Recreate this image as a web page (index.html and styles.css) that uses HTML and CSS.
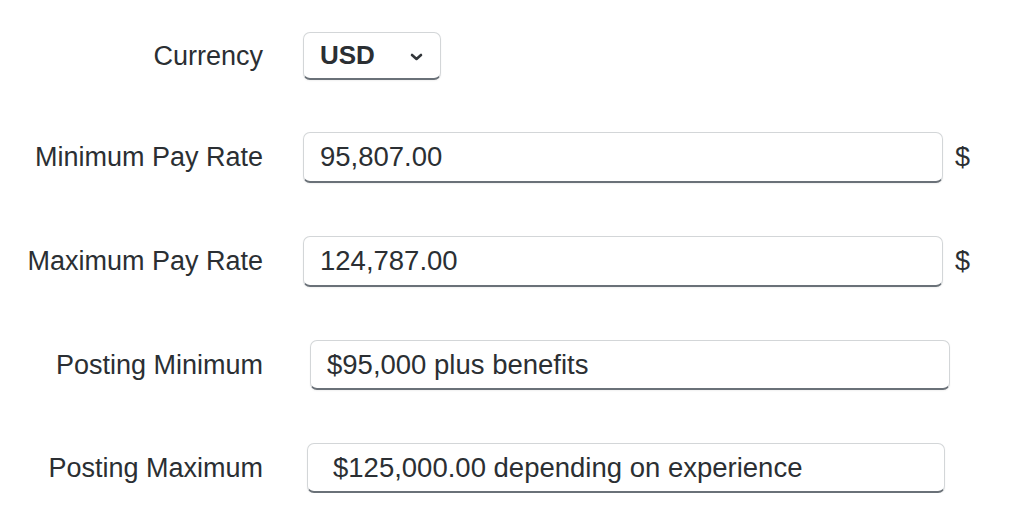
FILE: index.html
```html
<!DOCTYPE html>
<html lang="en">
<head>
    <meta charset="UTF-8">
    <meta name="viewport" content="width=device-width, initial-scale=1.0">
    <title>Pay Rate</title>
    <link rel="stylesheet" href="styles.css">
</head>
<body>
    <form class="pay-form">
        <div class="row row-select">
            <label class="label" for="currency">Currency</label>
            <div class="select">
                <span class="select-value">USD</span>
                <svg class="chevron" width="13" height="8" viewBox="0 0 13 8">
                    <path d="M2 2 L6.5 6 L11 2" fill="none" stroke="#32363a" stroke-width="2.6" stroke-linecap="round" stroke-linejoin="round"/>
                </svg>
            </div>
        </div>

        <div class="row">
            <label class="label" for="minPay">Minimum Pay Rate</label>
            <input class="field" type="text" id="minPay" value="95,807.00">
            <span class="unit">$</span>
        </div>

        <div class="row">
            <label class="label" for="maxPay">Maximum Pay Rate</label>
            <input class="field" type="text" id="maxPay" value="124,787.00">
            <span class="unit">$</span>
        </div>

        <div class="row row-posting">
            <label class="label" for="postMin">Posting Minimum</label>
            <input class="field field-shift" type="text" id="postMin" value="$95,000 plus benefits">
        </div>

        <div class="row row-posting">
            <label class="label" for="postMax">Posting Maximum</label>
            <input class="field field-shift-sm" type="text" id="postMax" value="$125,000.00 depending on experience">
        </div>
    </form>
</body>
</html>
```

FILE: styles.css
```css
body {
    font-family: 'Liberation Sans', Arial, sans-serif;
    background-color: #fff;
    color: #2b2f33;
    margin: 0;
    padding: 0;
}

.pay-form {
    display: flex;
    flex-direction: column;
    gap: 53px;
    padding-top: 32px;
}

.row {
    display: flex;
    align-items: center;
    height: 51px;
}

.row-select {
    height: 48px;
    margin-bottom: -1px;
}

.row-posting {
    height: 50px;
}

.label {
    width: 263px;
    padding-right: 40px;
    text-align: right;
    font-size: 27px;
    box-sizing: content-box;
    flex-shrink: 0;
}

.select,
.field {
    height: 100%;
    box-sizing: border-box;
    background-color: #fff;
    border: 1px solid #d3d6d8;
    border-bottom: 2px solid #6a7178;
    border-radius: 7px;
    box-shadow: 0 1px 2px rgba(0, 0, 0, 0.06);
}

.select {
    width: 138px;
    display: flex;
    align-items: center;
    padding: 0 17px 0 16px;
    justify-content: space-between;
}

.select-value {
    font-size: 26px;
    font-weight: bold;
}

.chevron {
    display: block;
    margin-top: 2px;
}

.field {
    width: 640px;
    padding: 0 16px;
    font-family: inherit;
    font-size: 27.5px;
    color: #2b2f33;
    outline: none;
}

.field-shift {
    margin-left: 7px;
}

.field-shift-sm {
    margin-left: 4px;
    width: 638px;
    padding-left: 25px;
}

.unit {
    margin-left: 12px;
    font-size: 27px;
}
```
